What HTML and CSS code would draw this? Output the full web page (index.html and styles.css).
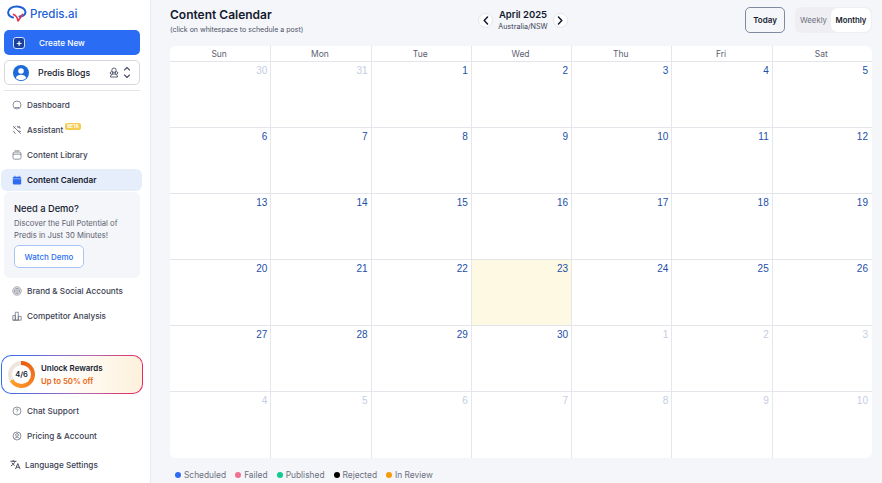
FILE: index.html
```html
<!DOCTYPE html>
<html lang="en">
<head>
    <meta charset="UTF-8">
    <title>Predis.ai - Content Calendar</title>
    <link rel="stylesheet" href="styles.css">
</head>
<body>
    <div class="app">
        <aside class="sidebar">
            <div class="logo">
                <svg width="20" height="18" viewBox="0 0 20 18" fill="none">
                    <path d="M6 12.500C2.500 11.500 1 9.500 1.200 7C1.600 3.500 5.500 1.200 10 1.400C14.500 1.600 18.500 3.800 18.500 7C18.500 9.500 16 11.200 12.500 11.500" stroke="#1d5fd8" stroke-width="2" stroke-linecap="round"/>
                    <path d="M6.500 9.500C9 10.500 10.500 12.500 11 16L15.500 9.500" stroke="#e5344f" stroke-width="1.700" stroke-linecap="round" stroke-linejoin="round"/>
                </svg>
                <span class="logo-text">Predis.ai</span>
            </div>
            <button class="create-btn">
                <span class="create-icon">+</span>
                <span>Create New</span>
            </button>
            <div class="brand-select">
                <svg width="16" height="16" viewBox="0 0 16 16">
                    <circle cx="8" cy="8" r="8" fill="#1d6ad8"/>
                    <circle cx="8" cy="6" r="2.800" fill="#fff"/>
                    <path d="M2.800 13C3.500 10.500 5.500 9.800 8 9.800C10.500 9.800 12.500 10.500 13.200 13C11.800 14.400 10 15 8 15C6 15 4.200 14.400 2.800 13Z" fill="#fff"/>
                </svg>
                <span class="brand-name">Predis Blogs</span>
                <svg width="10" height="11" viewBox="0 0 10 11" fill="none" stroke="#4a5166" stroke-width="0.900">
                    <circle cx="5" cy="3.200" r="2.200"/>
                    <circle cx="2.500" cy="6" r="1.300"/>
                    <circle cx="7.500" cy="6" r="1.300"/>
                    <path d="M1.500 10C1.500 8 3 7 5 7C7 7 8.500 8 8.500 10Z"/>
                </svg>
                <svg class="updown" width="8" height="13" viewBox="0 0 8 13" fill="none" stroke="#4a5166" stroke-width="1.100" stroke-linecap="round" stroke-linejoin="round">
                    <path d="M1.500 4L4 1.500L6.500 4"/>
                    <path d="M1.500 9L4 11.500L6.500 9"/>
                </svg>
            </div>
            <div class="divider"></div>

            <a class="nav-item">
                <svg class="nav-icon" viewBox="0 0 12 12" fill="none" stroke="#6b7080" stroke-width="0.900">
                    <circle cx="6" cy="6" r="4.800"/>
                    <path d="M3.500 9H8.500"/>
                </svg>
                Dashboard
            </a>
            <a class="nav-item">
                <svg class="nav-icon" viewBox="0 0 12 12" fill="none" stroke="#5c6170" stroke-width="1">
                    <path d="M1.500 1.500L10.500 10.500M4 1.500L2 4M8 7L10.500 8M6.500 1L7 3L9 1.500L8.500 3.500L10.500 3.500M1.500 7L4 10.500"/>
                </svg>
                Assistant
                <span class="beta">BETA</span>
            </a>
            <a class="nav-item">
                <svg class="nav-icon" viewBox="0 0 12 12" fill="none" stroke="#6b7080" stroke-width="0.900">
                    <rect x="1.200" y="2.500" width="9.600" height="8.500" rx="2"/>
                    <path d="M3 1H9M1.200 5H10.800"/>
                </svg>
                Content Library
            </a>
            <a class="nav-item active">
                <svg class="nav-icon" viewBox="0 0 12 12">
                    <rect x="1" y="2" width="10" height="9.500" rx="1.500" fill="#2f6bf0"/>
                    <path d="M3.500 1V3M8.500 1V3" stroke="#2f6bf0" stroke-width="1.100"/>
                    <path d="M1 4.500H11" stroke="#cfe0fb" stroke-width="0.600"/>
                </svg>
                Content Calendar
            </a>

            <div class="demo-card">
                <div class="demo-title">Need a Demo?</div>
                <p class="demo-text">Discover the Full Potential of Predis in Just 30 Minutes!</p>
                <button class="demo-btn">Watch Demo</button>
            </div>

            <a class="nav-item">
                <svg class="nav-icon" viewBox="0 0 12 12" fill="none" stroke="#6b7080" stroke-width="0.800">
                    <circle cx="6" cy="6" r="5"/>
                    <circle cx="6" cy="6" r="3.200"/>
                    <circle cx="6" cy="6" r="1.500"/>
                </svg>
                Brand &amp; Social Accounts
            </a>
            <a class="nav-item">
                <svg class="nav-icon" viewBox="0 0 12 12" fill="none" stroke="#6b7080" stroke-width="0.900">
                    <path d="M1 11V5.500H4V11M4 11V1.500H7.500V11M7.500 11V6.500H11V11H1Z"/>
                </svg>
                Competitor Analysis
            </a>

            <div class="rewards-wrap">
                <div class="rewards">
                    <div class="ring">
                        <span class="ring-label">4/6</span>
                    </div>
                    <div>
                        <div class="rewards-title">Unlock Rewards</div>
                        <div class="rewards-sub">Up to 50% off</div>
                    </div>
                </div>
            </div>

            <a class="nav-item">
                <svg class="nav-icon" viewBox="0 0 12 12" fill="none" stroke="#6b7080" stroke-width="0.900">
                    <circle cx="6" cy="6" r="4.800"/>
                    <path d="M4.700 4.700C4.700 3.900 5.300 3.400 6 3.400C6.800 3.400 7.300 3.900 7.300 4.600C7.300 5.500 6 5.600 6 6.700M6 8V8.800"/>
                </svg>
                Chat Support
            </a>
            <a class="nav-item">
                <svg class="nav-icon" viewBox="0 0 12 12" fill="none" stroke="#6b7080" stroke-width="0.900">
                    <circle cx="6" cy="6" r="4.800"/>
                    <circle cx="6" cy="4.800" r="1.700"/>
                    <path d="M2.800 9.500C3.500 8 4.600 7.600 6 7.600C7.400 7.600 8.500 8 9.200 9.500"/>
                </svg>
                Pricing &amp; Account
            </a>
            <a class="nav-item lang">
                <svg class="nav-icon lang-icon" viewBox="0 0 12 12" fill="none" stroke="#3c4152" stroke-width="1">
                    <path d="M0.500 2.500H7M3.500 1V2.500M5.500 2.500C5 4.500 3 6.500 1 7.500M2 4C2.800 5.500 3.800 6.300 5 7M6 11L8.500 5L11 11M7 9H10"/>
                </svg>
                Language Settings
            </a>
        </aside>

        <main class="main">
            <header class="top">
                <div class="title-col">
                    <h1>Content Calendar</h1>
                    <div class="hint">(click on whitespace to schedule a post)</div>
                </div>
                <div class="month-nav">
                    <span class="arrow">
                        <svg width="6" height="9" viewBox="0 0 6 9" fill="none" stroke="#141a2e" stroke-width="1.500" stroke-linecap="round" stroke-linejoin="round"><path d="M4.500 1L1.200 4.500L4.500 8"/></svg>
                    </span>
                    <div class="month-col">
                        <div class="month">April 2025</div>
                        <div class="tz">Australia/NSW</div>
                    </div>
                    <span class="arrow">
                        <svg width="6" height="9" viewBox="0 0 6 9" fill="none" stroke="#141a2e" stroke-width="1.500" stroke-linecap="round" stroke-linejoin="round"><path d="M1.500 1L4.800 4.500L1.500 8"/></svg>
                    </span>
                </div>
                <div class="top-right">
                    <button class="today">Today</button>
                    <div class="switch">
                        <span class="switch-opt">Weekly</span>
                        <span class="switch-opt on">Monthly</span>
                    </div>
                </div>
            </header>

            <section class="calendar">
                <div class="dow">Sun</div><div class="dow">Mon</div><div class="dow">Tue</div><div class="dow">Wed</div><div class="dow">Thu</div><div class="dow">Fri</div><div class="dow">Sat</div>

                <div class="day off">30</div><div class="day off">31</div><div class="day">1</div><div class="day">2</div><div class="day">3</div><div class="day">4</div><div class="day">5</div>
                <div class="day">6</div><div class="day">7</div><div class="day">8</div><div class="day">9</div><div class="day">10</div><div class="day">11</div><div class="day">12</div>
                <div class="day">13</div><div class="day">14</div><div class="day">15</div><div class="day">16</div><div class="day">17</div><div class="day">18</div><div class="day">19</div>
                <div class="day">20</div><div class="day">21</div><div class="day">22</div><div class="day today-cell">23</div><div class="day">24</div><div class="day">25</div><div class="day">26</div>
                <div class="day">27</div><div class="day">28</div><div class="day">29</div><div class="day">30</div><div class="day off">1</div><div class="day off">2</div><div class="day off">3</div>
                <div class="day off">4</div><div class="day off">5</div><div class="day off">6</div><div class="day off">7</div><div class="day off">8</div><div class="day off">9</div><div class="day off">10</div>
            </section>

            <footer class="legend">
                <span class="legend-item"><i class="dot blue"></i>Scheduled</span>
                <span class="legend-item"><i class="dot pink"></i>Failed</span>
                <span class="legend-item"><i class="dot green"></i>Published</span>
                <span class="legend-item"><i class="dot black"></i>Rejected</span>
                <span class="legend-item"><i class="dot orange"></i>In Review</span>
            </footer>
        </main>
    </div>
</body>
</html>
```

FILE: styles.css
```css
* {
    box-sizing: border-box;
}
html, body {
    height: 100%;
}
body {
    margin: 0;
    font-family: Inter, "Noto Sans", sans-serif;
    background-color: #f5f6fa;
    color: #141a2e;
    overflow: hidden;
}
button {
    font-family: inherit;
}
.app {
    display: flex;
    height: 483px;
}

/* sidebar */
.sidebar {
    width: 151px;
    flex-shrink: 0;
    background: #fff;
    border-right: 1px solid #e8eaf0;
    padding: 4px 8px 0 1px;
    display: flex;
    flex-direction: column;
}
.logo {
    display: flex;
    align-items: center;
    gap: 3px;
    height: 20px;
    padding-left: 6px;
    margin-bottom: 6px;
}
.logo-text {
    font-size: 11.500px;
    font-weight: 500;
    color: #1d5fd8;
}
.create-btn {
    display: flex;
    align-items: center;
    margin-left: 3px;
    width: 136px;
    height: 25px;
    background: #2a6df4;
    border: none;
    border-radius: 5px;
    color: #fff;
    font-size: 8.200px;
    font-weight: 500;
    padding: 0 0 0 9px;
    gap: 14px;
}
.create-icon {
    width: 12px;
    height: 12px;
    border: 1px solid #cfe0fb;
    border-radius: 3px;
    background: #1a3f9c;
    font-size: 9px;
    line-height: 9px;
    font-weight: 700;
    text-align: center;
}
.brand-select {
    display: flex;
    align-items: center;
    margin: 5px 0 0 3px;
    width: 136px;
    height: 25px;
    border: 1px solid #d5d8de;
    border-radius: 5px;
    padding: 0 8px 0 8px;
    gap: 3px;
}
.brand-name {
    font-size: 8.800px;
    font-weight: 500;
    margin-left: 6px;
    flex: 1;
}
.updown {
    margin-left: 1px;
}
.divider {
    margin: 5px 0 0 3px;
    width: 136px;
    height: 1px;
    background: #e3e5ea;
}
.nav-item {
    display: flex;
    align-items: center;
    height: 25px;
    padding-left: 11px;
    gap: 5px;
    font-size: 8.200px;
    font-weight: 500;
    color: #3c4152;
    border-radius: 6px;
    white-space: nowrap;
}
.divider + .nav-item {
    margin-top: 1px;
}
.nav-icon {
    width: 10px;
    height: 10px;
    flex-shrink: 0;
}
.active {
    width: 141px;
    background: #e6eefc;
    color: #141a2e;
    font-weight: 600;
    height: 22px;
    margin-top: 2px;
}
.beta {
    background: #f5cb50;
    color: #fff;
    font-size: 4.500px;
    font-weight: 700;
    padding: 1px 2px;
    border-radius: 2px;
    margin: -7px 0 0 -3px;
}
.demo-card {
    width: 136px;
    margin: 1px 0 0 3px;
    height: 86px;
    background: #f5f6fa;
    border-radius: 6px;
    padding: 10px 10px;
}
.demo-title {
    font-size: 9.300px;
    font-weight: 500;
    line-height: 14px;
}
.demo-text {
    margin: 2px 0 0;
    font-size: 7.700px;
    line-height: 11.500px;
    color: #5c6170;
}
.demo-btn {
    display: block;
    margin-top: 4px;
    width: 70px;
    height: 23px;
    background: #fff;
    border: 1px solid #a9c5f8;
    border-radius: 5px;
    color: #2a6df4;
    font-size: 8px;
    font-weight: 500;
    padding: 0;
}
.rewards-wrap {
    margin-top: 27px;
    width: 142px;
    height: 39px;
    padding: 1px;
    border-radius: 10px;
    background: linear-gradient(100deg, #2a6df4, #b06ab0 60%, #f0205c);
}
.rewards {
    display: flex;
    align-items: center;
    gap: 6px;
    height: 100%;
    padding-left: 6px;
    border-radius: 9px;
    background: linear-gradient(90deg, #fff 35%, #fdf1dc);
}
.ring {
    display: flex;
    align-items: center;
    justify-content: center;
    width: 27px;
    height: 27px;
    border-radius: 50%;
    background: conic-gradient(#e85d10, #ffa030 240deg, #ece6de 240deg);
    flex-shrink: 0;
}
.ring-label {
    display: flex;
    align-items: center;
    justify-content: center;
    width: 19px;
    height: 19px;
    background: #fff;
    border-radius: 50%;
    font-size: 7.500px;
    font-weight: 600;
}
.rewards-title {
    font-size: 7.900px;
    font-weight: 600;
    line-height: 13px;
}
.rewards-sub {
    font-size: 7.800px;
    font-weight: 600;
    line-height: 13px;
    color: #e8650f;
}
.rewards-wrap + .nav-item {
    margin-top: 4px;
}
.lang {
    padding-left: 9px;
    gap: 4px;
    margin-top: 4px;
}
.lang-icon {
    width: 11px;
    height: 11px;
}

/* main */
.main {
    flex: 1;
    display: flex;
    flex-direction: column;
    padding: 0 10px 0 19px;
    min-width: 0;
}
.top {
    display: grid;
    grid-template-columns: 1fr auto 1fr;
    align-items: start;
    height: 46px;
}
h1 {
    margin: 6px 0 0;
    font-size: 12px;
    line-height: 18px;
    font-weight: 600;
    white-space: nowrap;
}
.hint {
    font-size: 7px;
    line-height: 10px;
    margin-top: 1px;
    color: #4a5166;
    white-space: nowrap;
}
.month-nav {
    display: flex;
    align-items: center;
    gap: 5px;
    margin: 8px 0 0 4px;
}
.arrow {
    display: flex;
    align-items: center;
    justify-content: center;
    width: 15px;
    height: 15px;
    border-radius: 50%;
    background: #fff;
    border: 1px solid #e3e5ea;
}
.month-col {
    text-align: center;
}
.month {
    font-size: 9.500px;
    line-height: 13px;
    font-weight: 600;
}
.tz {
    font-size: 7.200px;
    line-height: 12px;
    color: #3c4152;
}
.top-right {
    display: flex;
    justify-content: flex-end;
    align-items: flex-start;
    gap: 10px;
    margin-top: 7px;
}
.today {
    width: 40px;
    height: 26px;
    padding: 0;
    border: 1px solid #7f8aa0;
    border-radius: 5px;
    font-size: 8px;
    font-weight: 600;
    color: #141a2e;
    background: transparent;
}
.switch {
    display: flex;
    width: 77px;
    height: 26px;
    padding: 1px;
    background: #efeff3;
    border-radius: 7px;
}
.switch-opt {
    flex: 1;
    display: flex;
    align-items: center;
    justify-content: center;
    font-size: 7.800px;
    color: #6b7080;
}
.on {
    flex: 0 0 40px;
    background: #fff;
    border-radius: 7px;
    color: #141a2e;
    font-weight: 600;
}

/* calendar */
.calendar {
    display: grid;
    grid-template-columns: repeat(7, 1fr);
    grid-template-rows: 16px repeat(5, 66px) 1fr;
    height: 412px;
    background: #fff;
    border-radius: 6px;
    overflow: hidden;
}
.dow {
    display: flex;
    align-items: center;
    justify-content: center;
    padding-right: 2px;
    font-size: 8.500px;
    color: #5c6170;
    border-bottom: 1px solid #e3e5ea;
    border-left: 1px solid #e6e7eb;
}
.day {
    padding: 2px 3px 0 0;
    text-align: right;
    font-family: "Liberation Sans", Arial, sans-serif;
    font-size: 10px;
    line-height: 13px;
    color: #1d4fa8;
    border-bottom: 1px solid #e3e5ea;
    border-left: 1px solid #e6e7eb;
}
.day:nth-child(7n) {
    padding-right: 4px;
}
.dow:nth-child(7n+1), .day:nth-child(7n+1) {
    border-left: none;
}
.day:nth-last-child(-n+7) {
    border-bottom: none;
}
.off {
    color: #c3cee2;
}
.today-cell {
    background: #fef9e3;
}

/* legend */
.legend {
    display: flex;
    gap: 9px;
    padding: 11px 0 0 5px;
}
.legend-item {
    display: flex;
    align-items: center;
    gap: 3px;
    font-size: 8.400px;
    line-height: 12px;
    color: #6b7080;
}
.dot {
    width: 6px;
    height: 6px;
    border-radius: 50%;
}
.blue { background: #2f6bf0; }
.pink { background: #f2708f; }
.green { background: #0ecb8f; }
.black { background: #000; }
.orange { background: #f79a0c; }
```
